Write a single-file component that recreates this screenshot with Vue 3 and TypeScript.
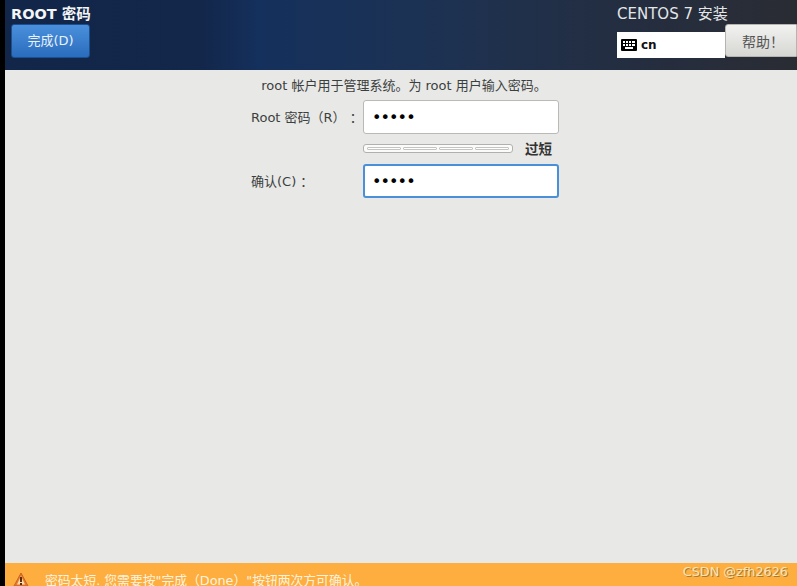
<template>
  <div class="screen">
    <div class="strip"></div>
    <div class="main">
      <header class="top">
        <div class="top-left">
          <h1>ROOT 密码</h1>
          <button class="done">完成(D)</button>
        </div>
        <div class="top-right">
          <div class="install">CENTOS 7 安装</div>
          <div class="top-row">
            <div class="layout">
              <svg width="16" height="12" viewBox="0 0 16 12">
                <rect width="16" height="12" rx="1" fill="#000" />
                <g fill="#fff">
                  <rect x="2" y="2" width="2" height="2" /><rect x="5" y="2" width="2" height="2" />
                  <rect x="8" y="2" width="2" height="2" /><rect x="11" y="2" width="3" height="2" />
                  <rect x="2" y="5" width="2" height="2" /><rect x="5" y="5" width="2" height="2" />
                  <rect x="8" y="5" width="2" height="2" /><rect x="11" y="5" width="3" height="2" />
                  <rect x="4" y="8" width="8" height="2" />
                </g>
              </svg>
              <span>cn</span>
            </div>
            <button class="help">帮助！</button>
          </div>
        </div>
      </header>
      <section class="content">
        <p class="intro">root 帐户用于管理系统。为 root 用户输入密码。</p>
        <div class="form">
          <label>Root 密码（R） ：</label>
          <input class="pw" type="password" value="12345" />
          <div class="meter-row">
            <div class="meter">
              <i v-for="n in 4" :key="n"></i>
            </div>
            <b>过短</b>
          </div>
          <label>确认(C) ：</label>
          <input class="pw focus" type="password" value="12345" />
        </div>
      </section>
      <footer class="warn">
        <svg width="16" height="15" viewBox="0 0 16 15">
          <path d="M8 1 L15 14 L1 14 Z" fill="#e8782c" stroke="#c9651f" stroke-width="1" stroke-linejoin="round" />
          <path d="M8 4 L12 12.5 L4 12.5 Z" fill="#fbd9a8" />
          <rect x="7" y="5" width="2" height="5" fill="#5a3010" />
          <rect x="7" y="11" width="2" height="2" fill="#5a3010" />
        </svg>
        <span>密码太短. 您需要按"完成（Done）"按钮两次方可确认。</span>
      </footer>
    </div>
    <div class="mark">CSDN @zfh2626</div>
  </div>
</template>

<script setup lang="ts">
</script>

<style>
html, body { margin: 0; overflow: hidden; }
</style>

<style scoped>
.screen { position: relative; display: flex; width: 797px; height: 586px; overflow: hidden; background: #000; font-family: "DejaVu Sans", "Noto Sans CJK SC", sans-serif; }
.strip { width: 5px; flex: none; background: #000; }
.main { flex: 1; min-width: 0; display: flex; flex-direction: column; background: #e8e8e6; }
.top { height: 70px; flex: none; display: flex; justify-content: space-between; background: linear-gradient(90deg, #12264a 0%, #13274b 25%, #14305c 32%, #1c3254 52%, #232e42 76%, #2a2c33 100%); color: #fff; }
.top-left { padding: 5px 0 0 6px; }
h1 { margin: 0; font-size: 14.5px; line-height: 18px; font-weight: 700; color: #f4f5f6; }
.done { display: block; margin-top: 1px; width: 79px; height: 34px; padding: 0 0 3px; border: 1px solid #1c4f8f; border-radius: 3px; background: linear-gradient(#4a90dc, #2a6cbd); color: #e9f1fa; font: 13px "DejaVu Sans", "Noto Sans CJK SC", sans-serif; }
.top-right { width: 180px; padding-top: 4px; }
.install { height: 20px; font-size: 15px; line-height: 20px; color: #e4e6e8; }
.top-row { display: flex; align-items: flex-start; }
.layout { margin-top: 8px; width: 108px; height: 26px; flex: none; display: flex; align-items: center; gap: 4px; padding-left: 4px; box-sizing: border-box; background: #fff; color: #111; font-size: 12px; font-weight: 700; }
.help { width: 72px; height: 33px; flex: none; padding: 0 0 0 4px; border: 1px solid #b4b4b0; border-radius: 3px 0 0 3px; background: linear-gradient(#f2f2f0, #d6d6d3); color: #555; font: 14px "DejaVu Sans", "Noto Sans CJK SC", sans-serif; }
.content { flex: 1; min-height: 0; color: #3c3f40; font-size: 13px; }
.intro { margin: 7px 0 0; height: 17px; line-height: 18px; text-align: center; width: 798px; }
.form { display: grid; grid-template-columns: 112px 196px; margin: 6px 0 0 246px; align-items: center; }
label { white-space: nowrap; padding-bottom: 2px; }
.pw { box-sizing: border-box; width: 196px; height: 34px; padding: 0 8px; border: 1px solid #b9b9b6; border-radius: 3px; background: #fff; font-family: "DejaVu Sans", sans-serif; font-size: 16px; letter-spacing: -0.9px; color: #000; outline: none; }
.pw.focus { border: 2px solid #4a90d9; padding: 0 7px; }
.meter-row { grid-column: 2; height: 30px; box-sizing: border-box; padding-bottom: 2px; display: flex; align-items: center; }
.meter { width: 150px; height: 9px; box-sizing: border-box; padding: 2px 3px; display: flex; gap: 2px; border: 1px solid #b0b0ad; border-radius: 3px; background: #fbfbfa; }
.meter i { flex: 1; height: 3px; box-sizing: border-box; background: #fff; border: 1px solid #c4c4c1; border-radius: 1px; }
.meter-row b { margin-left: 12px; color: #333; font-size: 13.5px; }
.warn { height: 23px; flex: none; display: flex; align-items: flex-start; gap: 16px; padding: 9px 0 0 8px; box-sizing: border-box; overflow: hidden; background: #fdae3f; color: #fff3df; font-size: 12.8px; line-height: 17px; }
.warn svg { flex: none; }
.warn span { white-space: nowrap; }
.mark { position: absolute; right: 9px; bottom: 5px; color: #fbe3b8; font-size: 12.8px; line-height: 18px; text-shadow: 1px 1px 0 #a77a36; }
</style>
